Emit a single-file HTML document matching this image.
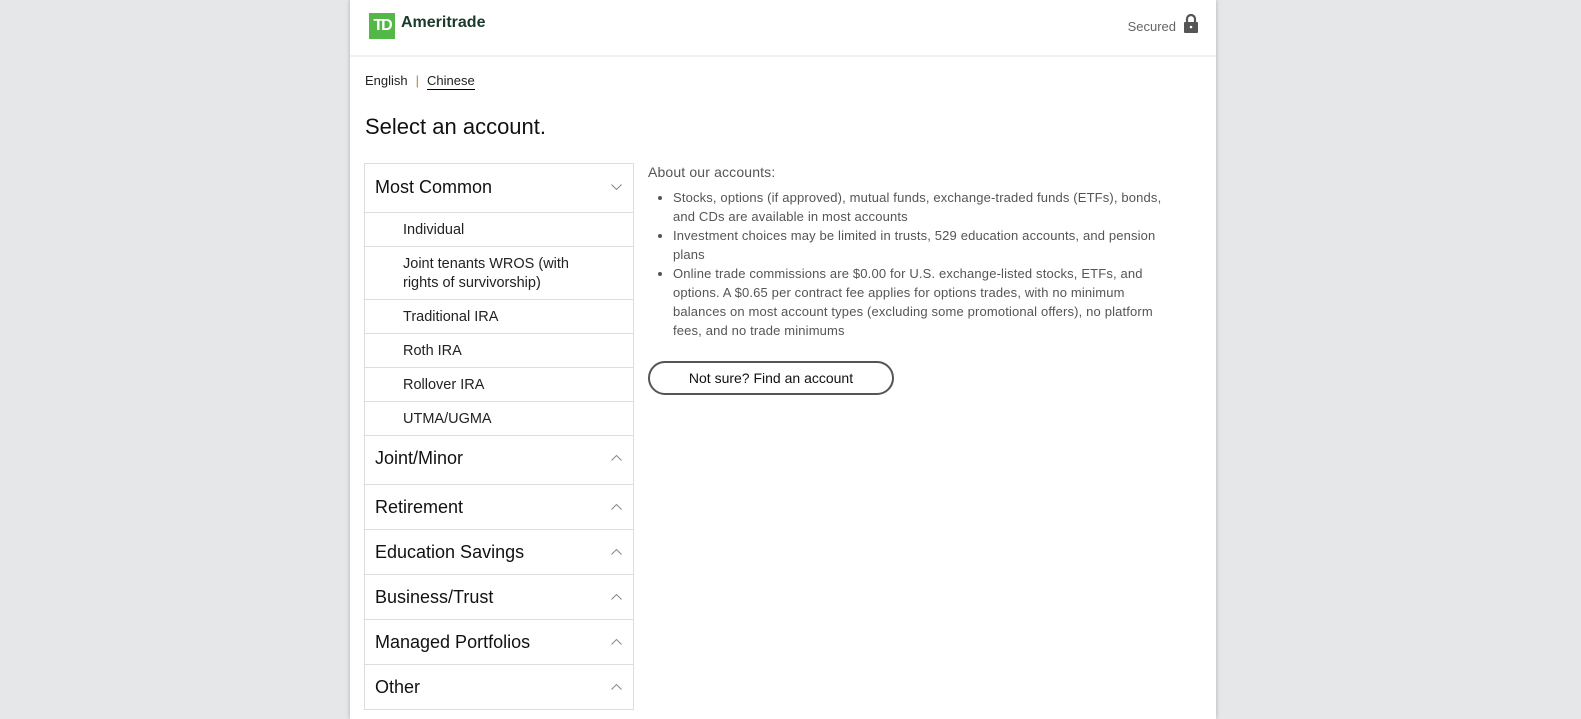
<!DOCTYPE html>
<html><head><style>
*{margin:0;padding:0;box-sizing:border-box}
body{width:1581px;height:719px;background:#e6e7e8;font-family:"Liberation Sans",sans-serif;overflow:hidden;position:relative}
.page{position:absolute;left:350px;top:0;width:866px;height:719px;background:#fff;box-shadow:0 0 4px rgba(0,0,0,.25)}
.hdr{height:57px;border-bottom:2px solid #f0f0f0;position:relative}
.logo{position:absolute;left:19px;top:13px;width:26px;height:26px;background:#54b848;color:#fff;font-weight:bold;font-size:16px;line-height:26px;text-align:center;letter-spacing:-2px}
.brand{position:absolute;left:51px;top:14px;font-weight:bold;font-size:16px;color:#1a3a2a}
.sec{position:absolute;right:40px;top:19px;font-size:13px;color:#666}
.lock{position:absolute;right:17px;top:13px}
.lang{position:absolute;left:15px;top:73px;font-size:13px;color:#222}
.lang span.sep{color:#c08040;margin:0 8px}
.lang u{text-decoration:none;border-bottom:1.5px solid #000;padding-bottom:1px}
h1{position:absolute;left:15px;top:114px;font-size:22px;font-weight:normal;color:#111}
.list{position:absolute;left:14px;top:163px;width:270px;border:1px solid #ddd}
.h{height:45px;border-top:1px solid #ddd;font-size:18px;color:#111;padding-left:10px;line-height:44px;position:relative}
.h:first-child{border-top:0;height:48px;line-height:46px}
.h svg{position:absolute;right:11px;top:19px}
.h:first-child svg{top:20px}
.it{border-top:1px solid #ddd;font-size:14.5px;color:#222;padding:8px 60px 0 38px;height:34px;line-height:19px}
.about{position:absolute;left:298px;top:164px;width:540px;color:#555;font-size:13px;letter-spacing:0.15px}
.about p{font-size:14px;margin-bottom:8px}
.about ul{padding-left:25px}
.about li{line-height:19px}
.btn{position:absolute;left:298px;top:361px;width:246px;height:34px;border:2px solid #555;border-radius:17px;text-align:center;line-height:30px;font-size:14px;color:#111}
</style></head><body>
<div class="page">
<div class="hdr"><div class="logo">TD</div><div class="brand">Ameritrade</div><div class="sec">Secured</div>
<svg class="lock" width="16" height="20" viewBox="0 0 16 20"><path d="M4 9V6a4 4 0 0 1 8 0v3" fill="none" stroke="#555" stroke-width="2.2"/><rect x="1" y="9" width="14" height="11" rx="1" fill="#555"/><circle cx="8" cy="14" r="1.3" fill="#fff"/></svg></div>
<div class="lang">English<span class="sep">|</span><u>Chinese</u></div>
<h1>Select an account.</h1>
<div class="list">
<div class="h">Most Common<svg width="11" height="6"><path d="M0.5 0.5L5.5 5.5L10.5 0.5" fill="none" stroke="#888"/></svg></div>
<div class="it">Individual</div>
<div class="it" style="height:53px">Joint tenants WROS (with rights of survivorship)</div>
<div class="it">Traditional IRA</div>
<div class="it">Roth IRA</div>
<div class="it">Rollover IRA</div>
<div class="it">UTMA/UGMA</div>
<div class="h" style="height:49px">Joint/Minor<svg width="11" height="6"><path d="M0.5 5.5L5.5 0.5L10.5 5.5" fill="none" stroke="#888"/></svg></div>
<div class="h">Retirement<svg width="11" height="6"><path d="M0.5 5.5L5.5 0.5L10.5 5.5" fill="none" stroke="#888"/></svg></div>
<div class="h">Education Savings<svg width="11" height="6"><path d="M0.5 5.5L5.5 0.5L10.5 5.5" fill="none" stroke="#888"/></svg></div>
<div class="h">Business/Trust<svg width="11" height="6"><path d="M0.5 5.5L5.5 0.5L10.5 5.5" fill="none" stroke="#888"/></svg></div>
<div class="h">Managed Portfolios<svg width="11" height="6"><path d="M0.5 5.5L5.5 0.5L10.5 5.5" fill="none" stroke="#888"/></svg></div>
<div class="h">Other<svg width="11" height="6"><path d="M0.5 5.5L5.5 0.5L10.5 5.5" fill="none" stroke="#888"/></svg></div>
</div>
<div class="about"><p>About our accounts:</p><ul>
<li>Stocks, options (if approved), mutual funds, exchange-traded funds (ETFs), bonds,<br>and CDs are available in most accounts</li>
<li>Investment choices may be limited in trusts, 529 education accounts, and pension<br>plans</li>
<li>Online trade commissions are $0.00 for U.S. exchange-listed stocks, ETFs, and<br>options. A $0.65 per contract fee applies for options trades, with no minimum<br>balances on most account types (excluding some promotional offers), no platform<br>fees, and no trade minimums</li></ul></div>
<div class="btn">Not sure? Find an account</div>
</div>
</body></html>
